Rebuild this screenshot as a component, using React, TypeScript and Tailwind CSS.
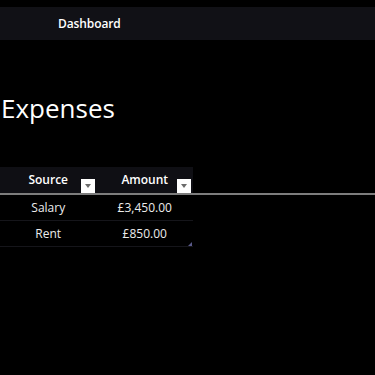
export default function App() {
  const rows = [
    { source: "Salary", amount: "£3,450.00" },
    { source: "Rent", amount: "£850.00" },
  ];
  return (
    <div
      className="min-h-[375px] bg-black pt-[7px] text-white"
      style={{ fontFamily: '"Open Sans", "Noto Sans", sans-serif' }}
    >
      <div className="flex h-[33px] items-center bg-[#111116] pl-[58px] text-[12px] font-semibold tracking-[-0.1px]">
        Dashboard
      </div>
      <h1 className="mt-[49px] pl-[1px] text-[26px] leading-[38px] font-normal">Expenses</h1>
      <div className="mt-[40px]">
        <div className="flex h-[26px] w-[193px] bg-[#0f0f14]">
          {["Source", "Amount"].map((h) => (
            <div key={h} className="relative flex w-1/2 items-center justify-center text-[12px] font-semibold">
              {h}
              <div className="absolute right-[2px] bottom-0 flex h-[14px] w-[14px] items-center justify-center bg-white">
                <svg width="6" height="4" viewBox="0 0 6 4">
                  <path d="M0 0h6L3 4z" fill="#6b6b6b" />
                </svg>
              </div>
            </div>
          ))}
        </div>
        <div className="h-[2px] w-full bg-[#7d7d7d]" />
        <div className="relative w-[193px]">
          {rows.map((r) => (
            <div key={r.source} className="flex h-[26px] border-b border-[#15151a] text-[12px] text-[#ececec]">
              <div className="flex w-1/2 items-center justify-center">{r.source}</div>
              <div className="flex w-1/2 items-center justify-center">{r.amount}</div>
            </div>
          ))}
          <svg className="absolute right-[1px] bottom-[1px]" width="4" height="4" viewBox="0 0 4 4">
            <path d="M4 0v4H0z" fill="#5a5a8a" />
          </svg>
        </div>
      </div>
    </div>
  );
}
